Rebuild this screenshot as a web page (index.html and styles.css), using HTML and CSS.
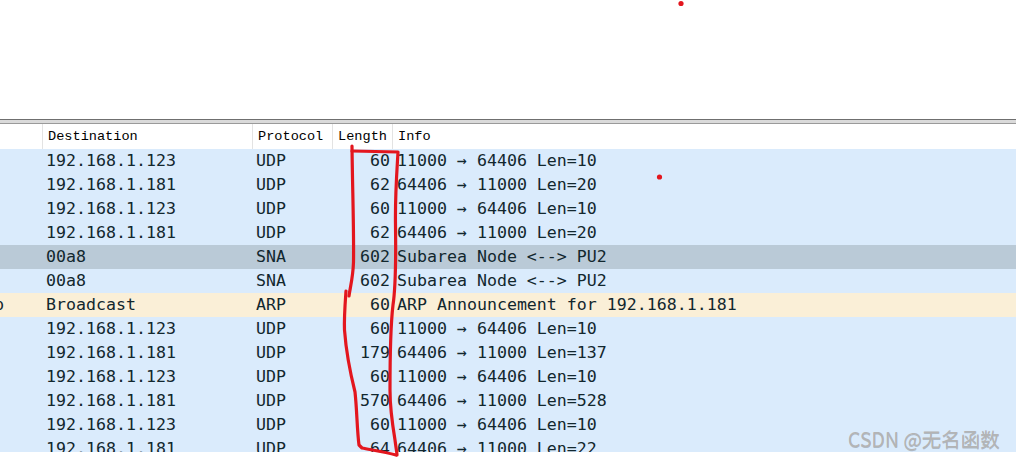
FILE: index.html
```html
<!DOCTYPE html>
<html>
<head>
<meta charset="utf-8">
<link rel="stylesheet" href="styles.css">
</head>
<body>
<div class="page">
  <div class="top-pane"></div>
  <div class="splitter"></div>
  <div class="packet-list">
    <div class="hdr">
      <div class="hc"></div>
      <div class="hc">Destination</div>
      <div class="hc">Protocol</div>
      <div class="hc">Length</div>
      <div class="hc">Info</div>
    </div>
    <div class="rows">
      <div class="row udp"><div class="c src"></div><div class="c">192.168.1.123</div><div class="c">UDP</div><div class="c len">60</div><div class="c info">11000 → 64406 Len=10</div></div>
      <div class="row udp"><div class="c src"></div><div class="c">192.168.1.181</div><div class="c">UDP</div><div class="c len">62</div><div class="c info">64406 → 11000 Len=20</div></div>
      <div class="row udp"><div class="c src"></div><div class="c">192.168.1.123</div><div class="c">UDP</div><div class="c len">60</div><div class="c info">11000 → 64406 Len=10</div></div>
      <div class="row udp"><div class="c src"></div><div class="c">192.168.1.181</div><div class="c">UDP</div><div class="c len">62</div><div class="c info">64406 → 11000 Len=20</div></div>
      <div class="row sel"><div class="c src"></div><div class="c">00a8</div><div class="c">SNA</div><div class="c len">602</div><div class="c info">Subarea Node &lt;--&gt; PU2</div></div>
      <div class="row udp"><div class="c src"></div><div class="c">00a8</div><div class="c">SNA</div><div class="c len">602</div><div class="c info">Subarea Node &lt;--&gt; PU2</div></div>
      <div class="row arp"><div class="c src"><span class="clip">p</span></div><div class="c">Broadcast</div><div class="c">ARP</div><div class="c len">60</div><div class="c info">ARP Announcement for 192.168.1.181</div></div>
      <div class="row udp"><div class="c src"></div><div class="c">192.168.1.123</div><div class="c">UDP</div><div class="c len">60</div><div class="c info">11000 → 64406 Len=10</div></div>
      <div class="row udp"><div class="c src"></div><div class="c">192.168.1.181</div><div class="c">UDP</div><div class="c len">179</div><div class="c info">64406 → 11000 Len=137</div></div>
      <div class="row udp"><div class="c src"></div><div class="c">192.168.1.123</div><div class="c">UDP</div><div class="c len">60</div><div class="c info">11000 → 64406 Len=10</div></div>
      <div class="row udp"><div class="c src"></div><div class="c">192.168.1.181</div><div class="c">UDP</div><div class="c len">570</div><div class="c info">64406 → 11000 Len=528</div></div>
      <div class="row udp"><div class="c src"></div><div class="c">192.168.1.123</div><div class="c">UDP</div><div class="c len">60</div><div class="c info">11000 → 64406 Len=10</div></div>
      <div class="row udp"><div class="c src"></div><div class="c">192.168.1.181</div><div class="c">UDP</div><div class="c len">64</div><div class="c info">64406 → 11000 Len=22</div></div>
    </div>
  </div>
  <div class="bottom"></div>

  <svg class="ink" width="1016" height="458" viewBox="0 0 1016 458">
    <g fill="none" stroke="#e3161e" stroke-width="3.2" stroke-linecap="round" stroke-linejoin="round">
      <path d="M352 146 C352.5 190 354 230 353.5 262 C353 278 350 288 349 296"/>
      <path d="M352 151 L398 152 C397 170 395 195 395.5 225 C396 260 396 285 393 305 C390 330 390 360 390 390 C390 410 393 428 395 440 C396 448 397 453 397 455"/>
      <path d="M346 291 C345 305 344 318 344.5 330 C346 350 350 372 355 392 C357 410 357 430 359 445 L362 448 C372 450 385 452 396 455"/>
    </g>
    <circle cx="681" cy="3.5" r="2.6" fill="#e3161e"/>
    <circle cx="659.5" cy="177" r="2.6" fill="#e3161e"/>
  </svg>
  <div class="watermark">CSDN @无名函数</div>
</div>
</body>
</html>
```

FILE: styles.css
```css
html, body {
  margin: 0;
  padding: 0;
  background: #ffffff;
}

.page {
  position: relative;
  width: 1016px;
  height: 458px;
  overflow: hidden;
  background: #ffffff;
}

.top-pane {
  height: 119px;
  background: #ffffff;
}

.splitter {
  height: 3px;
  border-top: 1px solid #6f6f6f;
  border-bottom: 1px solid #9a9a9a;
  background: #dadada;
}

.packet-list {
  display: flex;
  flex-direction: column;
}

.hdr {
  display: grid;
  grid-template-columns: 42px 210px 80px 60px 1fr;
  height: 25px;
  background: #ffffff;
  font-family: "Liberation Mono", monospace;
  font-size: 13.6px;
  color: #000000;
}

.hc {
  display: flex;
  align-items: center;
  padding-left: 5px;
  border-left: 1px solid #e3e3e3;
  white-space: nowrap;
}

.hc:first-child {
  border-left: none;
}

.rows {
  height: 303px;
  overflow: hidden;
  display: flex;
  flex-direction: column;
}

.row {
  display: grid;
  grid-template-columns: 42px 210px 80px 60px 1fr;
  height: 24px;
  flex: none;
  font-family: "DejaVu Sans Mono", monospace;
  font-size: 16.6px;
  color: #12272e;
  white-space: nowrap;
}

.udp { background: #daebfc; }
.sel { background: #bacad7; }
.arp { background: #faefd7; }

.c {
  display: flex;
  align-items: center;
  padding-left: 4px;
  padding-bottom: 1px;
  overflow: hidden;
}

.src {
  padding-left: 0;
}

.clip {
  margin-left: -6px;
}

.len {
  justify-content: flex-end;
  padding-left: 0;
  padding-right: 2px;
}

.info {
  padding-left: 5px;
}

.bottom {
  height: 10px;
  background: #ffffff;
}

.ink {
  position: absolute;
  left: 0;
  top: 0;
  pointer-events: none;
}

.watermark {
  position: absolute;
  left: 848px;
  top: 425px;
  font-family: "Noto Sans CJK SC", "Noto Sans", sans-serif;
  font-size: 19.5px;
  line-height: 28px;
  color: #b4b4b4;
  text-shadow: 0 1px 0 rgba(90, 90, 90, 0.35);
  white-space: nowrap;
}
```
